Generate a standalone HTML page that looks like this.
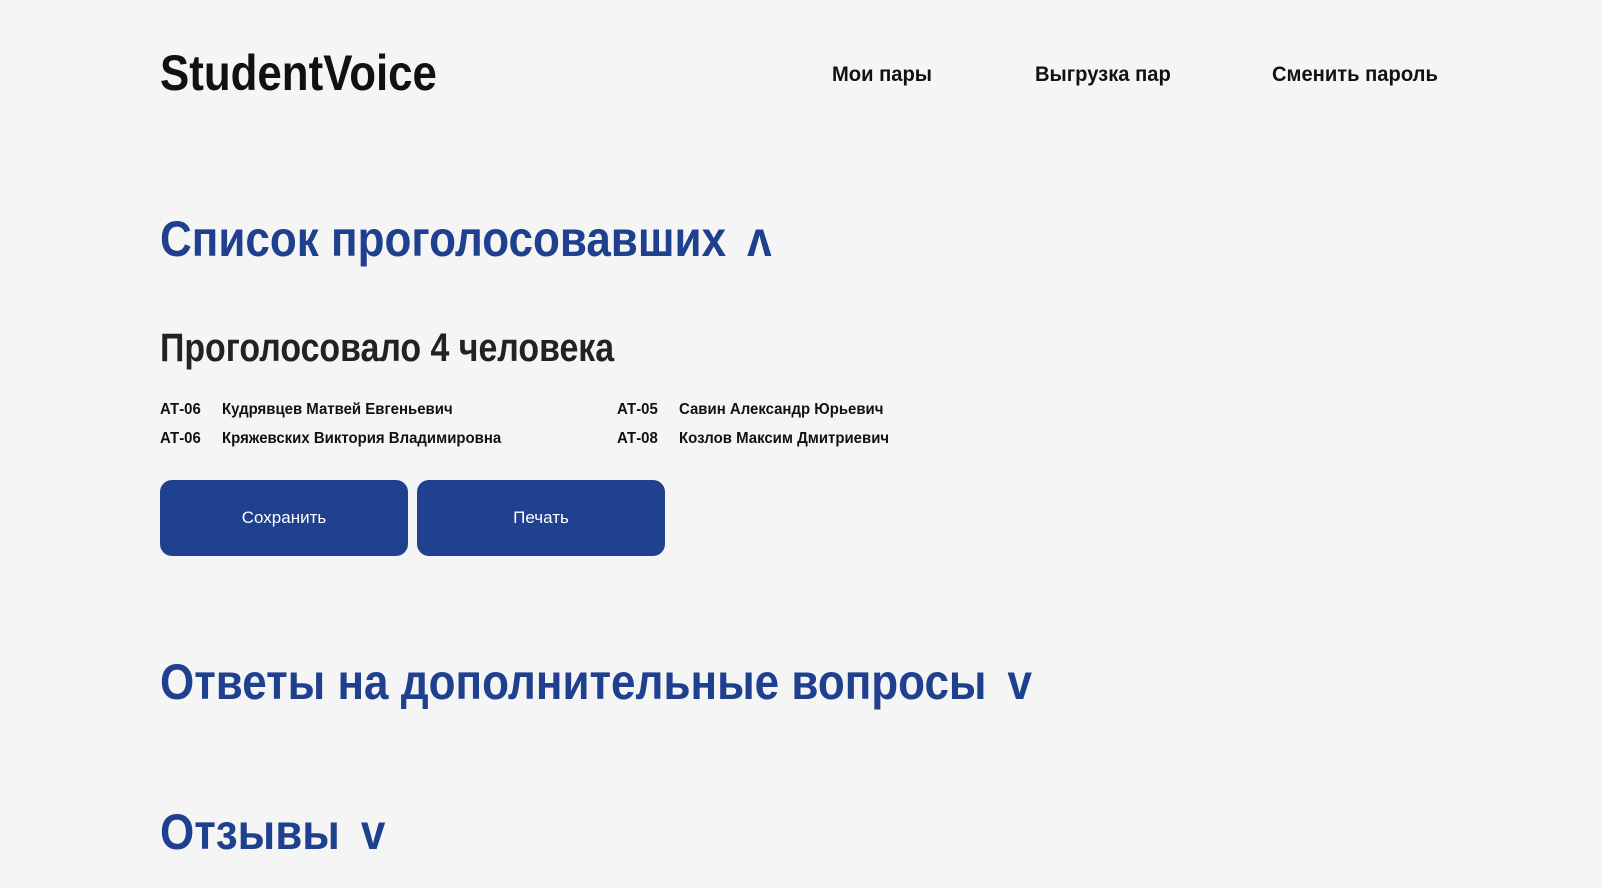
<!DOCTYPE html>
<html><head><meta charset="utf-8"><style>
body{margin:0;width:1602px;height:888px;background:#f5f5f5;font-family:"Liberation Sans",Arial,sans-serif;font-weight:bold;position:relative;overflow:hidden}
.a{position:absolute;white-space:nowrap;line-height:1}
.b{color:#1f3f8f}
.btn{position:absolute;top:480px;width:248px;height:76px;background:#1f418f;border-radius:12px;color:#fff;font-weight:normal;font-size:17px;display:flex;align-items:center;justify-content:center}
.s{display:inline-block;transform-origin:left;}
.r{font-size:16px;color:#111}
.r .s{transform:scaleX(.935)}
.n{font-size:21px;color:#111}
.n .s{transform:scaleX(.96)}
.c{margin-left:10px}
</style></head><body>
<div class="a" style="left:160px;top:48px;font-size:50px;color:#111"><span class="s" style="transform:scaleX(.877)">StudentVoice</span></div>
<div class="a n" style="left:832px;top:64px"><span class="s">Мои пары</span></div>
<div class="a n" style="left:1035px;top:64px"><span class="s">Выгрузка пар</span></div>
<div class="a n" style="left:1272px;top:64px"><span class="s">Сменить пароль</span></div>
<div class="a b" style="left:160px;top:214px;font-size:50px"><span class="s" style="transform:scaleX(.88)">Список проголосовавших <span class="c">ʌ</span></span></div>
<div class="a" style="left:160px;top:328px;font-size:40px;color:#222"><span class="s" style="transform:scaleX(.847)">Проголосовало 4 человека</span></div>
<div class="a r" style="left:160px;top:402px"><span class="s">АТ-06</span></div>
<div class="a r" style="left:222px;top:402px"><span class="s">Кудрявцев Матвей Евгеньевич</span></div>
<div class="a r" style="left:160px;top:431px"><span class="s">АТ-06</span></div>
<div class="a r" style="left:222px;top:431px"><span class="s">Кряжевских Виктория Владимировна</span></div>
<div class="a r" style="left:617px;top:402px"><span class="s">АТ-05</span></div>
<div class="a r" style="left:679px;top:402px"><span class="s">Савин Александр Юрьевич</span></div>
<div class="a r" style="left:617px;top:431px"><span class="s">АТ-08</span></div>
<div class="a r" style="left:679px;top:431px"><span class="s">Козлов Максим Дмитриевич</span></div>
<div class="btn" style="left:160px">Сохранить</div>
<div class="btn" style="left:417px">Печать</div>
<div class="a b" style="left:160px;top:657px;font-size:50px"><span class="s" style="transform:scaleX(.88)">Ответы на дополнительные вопросы <span class="c">v</span></span></div>
<div class="a b" style="left:160px;top:807px;font-size:50px"><span class="s" style="transform:scaleX(.88)">Отзывы <span class="c">v</span></span></div>
</body></html>
